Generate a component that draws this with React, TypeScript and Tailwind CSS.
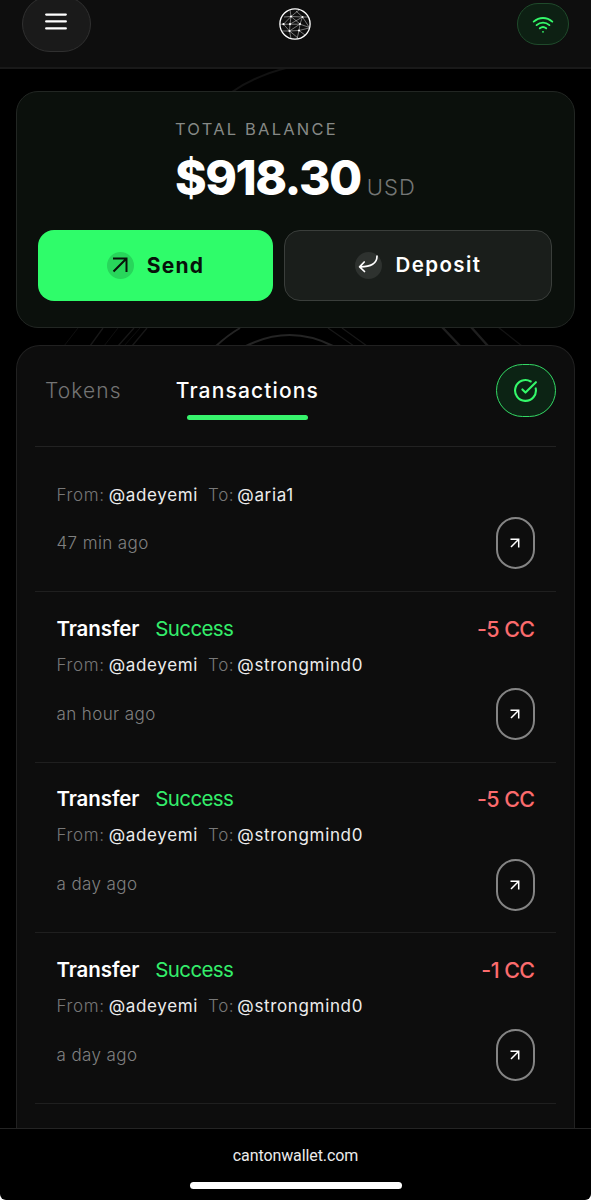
import { CircleCheckBig } from "lucide-react";

type Transaction = {
  id: number;
  to: string;
  time: string;
  amount?: string;
};

const transactions: Transaction[] = [
  { id: 1, to: "@aria1", time: "47 min ago" },
  { id: 2, to: "@strongmind0", time: "an hour ago", amount: "-5 CC" },
  { id: 3, to: "@strongmind0", time: "a day ago", amount: "-5 CC" },
  { id: 4, to: "@strongmind0", time: "a day ago", amount: "-1 CC" },
];

function GlobeLogo() {
  return (
    <svg viewBox="0 0 32 32" className="size-8" fill="none" stroke="white">
      <circle cx="16" cy="16" r="15.1" strokeWidth="1.3" />
      <g strokeWidth="0.55" opacity="0.8">
        <path d="M12 8.5 11 1.8M12 8.5 20 2M12 8.5 23.5 9 17 3M12 8.5 5 9M12 8.5 4.5 16.2M12 8.5 11 16.2M12 8.5 21 16M23.5 9 21 16M23.5 9 29 9M23.5 9 11 16.2M23.5 9 30 19" />
        <path d="M1 16.2H21L30.5 19.5M4.5 16.2 10.5 23M11 16.2 10.5 23M21 16 10.5 23M21 16 20 22.5M10.5 23 20 22.5 30 20M10.5 23 3 23M10.5 23 12 30.5M10.5 23 19 30M20 22.5 18 31M20 22.5 26 27" />
      </g>
      <g fill="white" stroke="none">
        <circle cx="12" cy="8.5" r="1.1" />
        <circle cx="23.5" cy="9" r="1" />
        <circle cx="4.5" cy="16.2" r="1.1" />
        <circle cx="11" cy="16.2" r="1.1" />
        <circle cx="21" cy="16" r="1" />
        <circle cx="10.5" cy="23" r="1.1" />
        <circle cx="20" cy="22.5" r="1.1" />
      </g>
    </svg>
  );
}

// faint rings that show through the gaps between the cards
function BackgroundRings() {
  return (
    <svg viewBox="0 0 591 400" className="absolute inset-x-0 top-0 h-[400px] w-full" fill="none" stroke="white">
      <path d="M232 92Q255 76 286 68" strokeWidth="2" opacity="0.07" />
      <path d="M216 346Q228 335 240 328" strokeWidth="2" opacity="0.14" />
      <path d="M246 346Q290 324 333 346" strokeWidth="2" opacity="0.14" />
      <path d="M328 328 354 346M342 328 367 346" strokeWidth="1.2" opacity="0.09" />
      <path d="M442 327 460 346M471 327 488 346" strokeWidth="2.4" opacity="0.12" />
      <path d="M498 327 522 346" strokeWidth="1.2" opacity="0.08" />
      <path d="M132 346 147 328M118 346 134 328M90 346 103 328" strokeWidth="1.3" opacity="0.09" />
      <path d="M124 346 140 328M104 346 118 328M64 346 78 328" strokeWidth="1" opacity="0.06" />
    </svg>
  );
}

function Header() {
  return (
    <header className="relative grid h-[69px] shrink-0 grid-cols-3 items-start border-b-2 border-[#191919] bg-[#0e0e0e] px-[22px]">
      <button className="-mt-1 flex h-14 w-[68.5px] items-center justify-center rounded-full border border-[#303030] bg-[#1a1a1a]">
        <svg viewBox="0 0 22 20" className="-mt-1 h-5 w-[22px]" stroke="white" strokeWidth="2.3" strokeLinecap="round">
          <path d="M1.2 2.6H20.8M1.2 9.4H20.8M1.2 16.4H20.8" />
        </svg>
      </button>
      <div className="mt-2 justify-self-center">
        <GlobeLogo />
      </div>
      <button className="mt-[3px] flex h-[42px] w-[52px] items-center justify-center justify-self-end rounded-full border border-[#1f4a2b] bg-[#0d2013] text-[#34f86a]">
        <svg viewBox="0 0 24 20" className="mt-px h-5 w-6" fill="none" stroke="currentColor" strokeWidth="1.9" strokeLinecap="round">
          <path d="M2.7 6.6C8.2 1.8 15.8 1.8 21.3 6.6M5.6 10.1C9.4 6.8 14.6 6.8 18.4 10.1M8.8 13.3C10.8 11.7 13.2 11.7 15.2 13.3" />
          <circle cx="12" cy="16.8" r="0.9" fill="currentColor" stroke="none" />
        </svg>
      </button>
    </header>
  );
}

function BalanceCard() {
  return (
    <section className="relative mx-4 mt-[22px] h-[237px] shrink-0 rounded-[22px] border border-[#222623] bg-[#0b100c] px-[21px]">
      <div className="ml-[137px] h-[137.5px] pt-[25px]">
        <p className="text-[16.5px] leading-6 tracking-[2.2px] whitespace-nowrap text-[#868986]">TOTAL BALANCE</p>
        <div className="flex items-baseline">
          <span className="text-[48px] leading-[74px] font-extrabold tracking-[-1.5px] text-white">$918.30</span>
          <span className="ml-[6px] text-[22px] font-light tracking-[1.1px] text-[#747775]">USD</span>
        </div>
      </div>
      <div className="flex gap-[11px]">
        <button className="flex h-[71.5px] w-[235px] items-center justify-center rounded-2xl bg-[#2ffc6a] text-[#07120a]">
          <span className="flex size-[27px] items-center justify-center rounded-full bg-[#28d65b]">
            <svg viewBox="0 0 16 16" className="size-4" fill="none" stroke="currentColor" strokeWidth="2">
              <path d="M1 1.5H14.5V15M14.5 1.5 1.5 14.5" />
            </svg>
          </span>
          <span className="ml-[13px] text-[21px] font-bold tracking-[1.2px]">Send</span>
        </button>
        <button className="flex h-[71.5px] w-[268px] items-center justify-center rounded-2xl border border-[#3a3e3b] bg-[#1a1e1b] text-white">
          <span className="flex size-[27px] items-center justify-center rounded-full bg-[#2e322f]">
            <svg viewBox="0 0 20 20" className="size-5" fill="none" stroke="currentColor" strokeWidth="1.7" strokeLinecap="round" strokeLinejoin="round">
              <path d="M19 1.2C19 8.2 13 12 1.8 11.8M6.2 7 1.6 11.8 6.5 16.5" />
            </svg>
          </span>
          <span className="mt-px ml-[14px] text-[20.5px] font-semibold tracking-[1.4px]">Deposit</span>
        </button>
      </div>
    </section>
  );
}

function TransactionRow({ to, time, amount }: Transaction) {
  return (
    <div className={`border-b border-[#1f1f1f] px-[21.5px] ${amount ? "h-[170.5px] pt-[21px]" : "h-[145px] pt-[32px]"}`}>
      {amount && (
        <div className="flex h-8 items-center justify-between">
          <div className="flex items-center">
            <span className="text-[20.5px] font-semibold tracking-[-0.1px] text-white">Transfer</span>
            <span className="ml-4 text-[20.5px] tracking-[-0.65px] text-[#34ee6b]">Success</span>
          </div>
          <span className="text-[21.5px] font-medium tracking-[-0.6px] text-[#fb6b6d]">{amount}</span>
        </div>
      )}
      <p className={`flex h-8 items-center pt-px text-[17px] tracking-[0.65px] whitespace-nowrap ${amount ? "mt-1" : ""}`}>
        <span className="font-light text-[#777]">From:</span>
        <span className="ml-[4px] text-[#ececec]">@adeyemi</span>
        <span className="ml-[10px] font-light text-[#777]">To:</span>
        <span className="ml-[3px] text-[#ececec]">{to}</span>
      </p>
      <div className={`flex items-center justify-between ${amount ? "mt-[7px]" : "mt-[6px]"}`}>
        <span className="pt-px text-[17px] font-light tracking-[0.4px] text-[#808080]">{time}</span>
        <button className="flex h-[52px] w-[38.5px] items-center justify-center rounded-full border-2 border-[#848484] text-white">
          <svg viewBox="0 0 10 10" className="size-[10px]" fill="none" stroke="currentColor" strokeWidth="1.5">
            <path d="M0.5 1.3H8.7V9.5M8.7 1.3 1 9" />
          </svg>
        </button>
      </div>
    </div>
  );
}

function ActivityCard() {
  return (
    <section className="relative mx-4 mt-[17px] min-h-0 flex-1 overflow-hidden rounded-t-[24px] border border-b-0 border-[#212121] bg-[#0d0d0d] px-[18px]">
      <div className="flex h-[101px] items-start justify-between border-b border-[#222]">
        <div className="flex items-start pt-[29px] pl-[10px] text-[21px] leading-8">
          <button className="font-light tracking-[1.1px] text-[#747474]">Tokens</button>
          <button className="ml-[54px] flex flex-col items-center font-medium tracking-[1.15px] text-white">
            Transactions
            <span className="mt-[8px] h-[4.5px] w-[121px] rounded-full bg-[#37f36c]" />
          </button>
        </div>
        <button className="mt-[18px] flex h-[52.5px] w-[60.5px] items-center justify-center rounded-full border-[1.5px] border-[#34d965] bg-[#0c2314] text-[#34f86a]">
          <CircleCheckBig className="size-[25px]" strokeWidth={2} />
        </button>
      </div>
      {transactions.map((tx) => (
        <TransactionRow key={tx.id} {...tx} />
      ))}
    </section>
  );
}

export default function App() {
  return (
    <div className="h-[1200px] w-full bg-white">
      <div className="relative flex h-full flex-col overflow-hidden rounded-b-[6px] bg-black font-[Inter,sans-serif]">
        <BackgroundRings />
        <Header />
        <BalanceCard />
        <ActivityCard />
        <footer className="relative flex h-[72px] shrink-0 flex-col items-center border-t border-[#242424]">
          <span className="mt-[15px] font-[Roboto,sans-serif] text-[16px] leading-6 tracking-[-0.1px] text-[#ececec]">
            cantonwallet.com
          </span>
          <span className="mt-[14px] h-[7px] w-[212px] rounded-full bg-white" />
        </footer>
      </div>
    </div>
  );
}
